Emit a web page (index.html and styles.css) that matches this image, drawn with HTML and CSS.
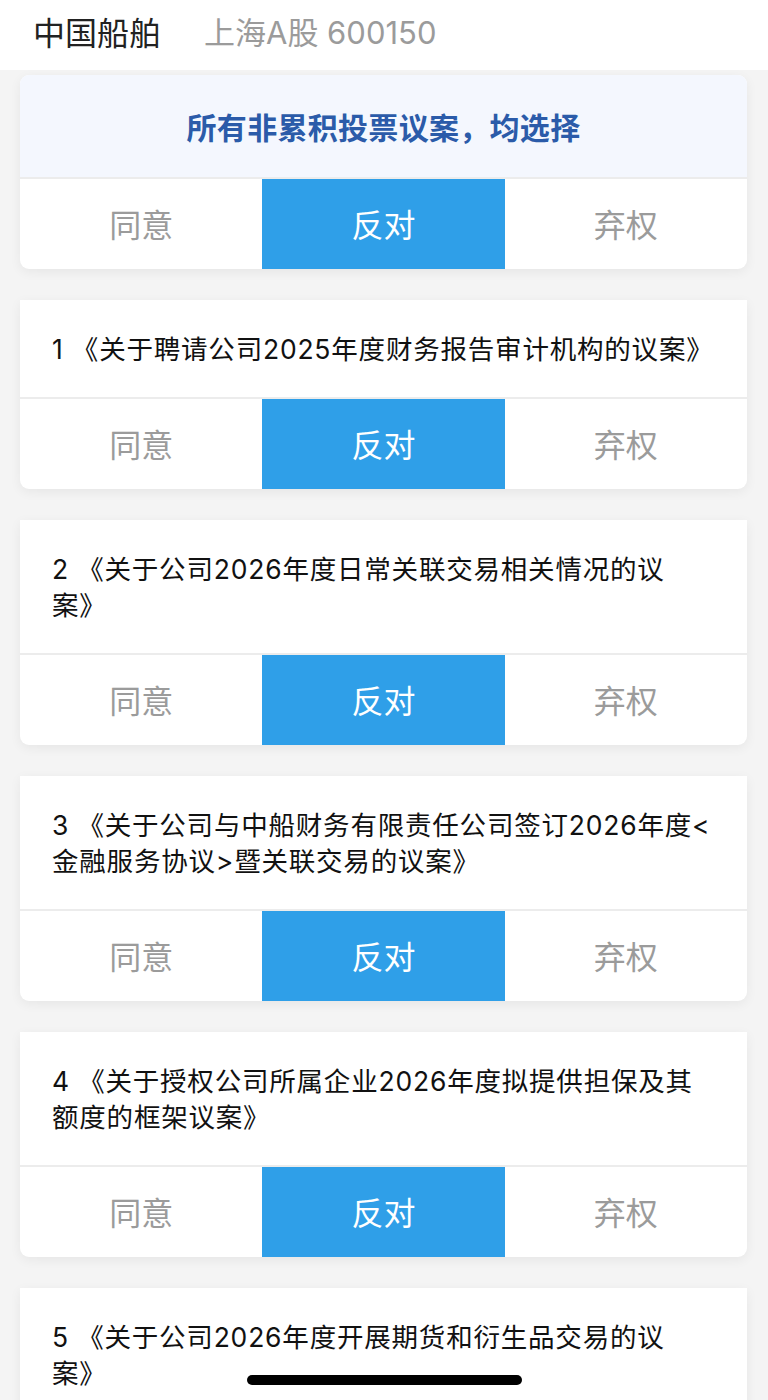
FILE: index.html
```html
<!DOCTYPE html>
<html lang="zh-CN">
<head>
<meta charset="utf-8">
<title>中国船舶 投票</title>
<link rel="stylesheet" href="styles.css">
</head>
<body>
<header class="topbar">
  <span class="stock-name">中国船舶</span>
  <span class="stock-code">上海A股 600150</span>
</header>

<main class="list">
  <section class="card card--all">
    <div class="banner">所有非累积投票议案，均选择</div>
    <div class="options">
      <div class="opt">同意</div>
      <div class="opt opt--on">反对</div>
      <div class="opt">弃权</div>
    </div>
  </section>

  <section class="card">
    <div class="title">1 《关于聘请公司2025年度财务报告审计机构的议案》</div>
    <div class="options">
      <div class="opt">同意</div>
      <div class="opt opt--on">反对</div>
      <div class="opt">弃权</div>
    </div>
  </section>

  <section class="card">
    <div class="title">2 《关于公司2026年度日常关联交易相关情况的议<br>案》</div>
    <div class="options">
      <div class="opt">同意</div>
      <div class="opt opt--on">反对</div>
      <div class="opt">弃权</div>
    </div>
  </section>

  <section class="card">
    <div class="title">3 《关于公司与中船财务有限责任公司签订2026年度&lt;<br>金融服务协议&gt;暨关联交易的议案》</div>
    <div class="options">
      <div class="opt">同意</div>
      <div class="opt opt--on">反对</div>
      <div class="opt">弃权</div>
    </div>
  </section>

  <section class="card">
    <div class="title">4 《关于授权公司所属企业2026年度拟提供担保及其<br>额度的框架议案》</div>
    <div class="options">
      <div class="opt">同意</div>
      <div class="opt opt--on">反对</div>
      <div class="opt">弃权</div>
    </div>
  </section>

  <section class="card card--last">
    <div class="title">5 《关于公司2026年度开展期货和衍生品交易的议<br>案》</div>
  </section>
</main>

<div class="home-indicator"></div>
</body>
</html>
```

FILE: styles.css
```css
* {
  box-sizing: border-box;
}

html, body {
  margin: 0;
  padding: 0;
}

body {
  background: #f4f4f4;
  font-family: Inter, "Noto Sans CJK SC", sans-serif;
  color: #111;
  -webkit-font-smoothing: antialiased;
}

.topbar {
  height: 70px;
  background: #ffffff;
  display: flex;
  align-items: center;
  gap: 43px;
  padding: 0 0 9px 33px;
}

.stock-name {
  font-size: 32px;
  color: #222;
}

.stock-code {
  font-size: 31px;
  color: #9b9b9b;
}

.list {
  display: flex;
  flex-direction: column;
  gap: 31px;
  padding: 5px 21px 40px 20px;
}

.card {
  background: #ffffff;
  border-radius: 0 0 9px 9px;
  overflow: hidden;
  box-shadow: 0 3px 12px rgba(0, 0, 0, 0.06);
}

.card--all {
  border-radius: 9px;
}

.card--last {
  padding-bottom: 40px;
}

.banner {
  height: 102px;
  background: #f4f7fe;
  display: flex;
  align-items: center;
  justify-content: center;
  font-size: 30px;
  font-weight: 700;
  color: #2b5ba9;
  letter-spacing: 0.3px;
}

.title {
  padding: 30.5px 32px 30.5px 32px;
  font-size: 26.5px;
  line-height: 36px;
  color: #111;
  letter-spacing: 0.8px;
}

.options {
  display: grid;
  grid-template-columns: 1fr 1fr 1fr;
  height: 92px;
  border-top: 2px solid #ececec;
}

.opt {
  display: flex;
  align-items: center;
  justify-content: center;
  font-size: 32px;
  color: #9b9b9b;
  padding-bottom: 3px;
}

.opt--on {
  background: #2f9fe8;
  color: #ffffff;
}

.home-indicator {
  position: fixed;
  left: 247px;
  bottom: 15px;
  width: 275px;
  height: 10px;
  border-radius: 5px;
  background: #000000;
}
```
